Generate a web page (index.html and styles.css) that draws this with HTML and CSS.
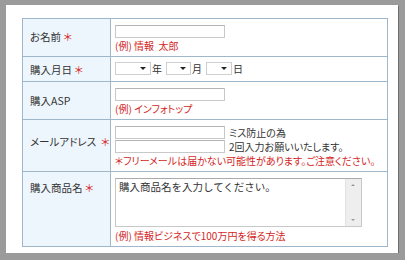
FILE: index.html
```html
<!DOCTYPE html>
<html lang="ja">
<head>
<meta charset="utf-8">
<link rel="stylesheet" href="styles.css">
</head>
<body>
<div class="panel">
  <table class="form">
    <tr class="r1">
      <th>お名前 <span class="req">＊</span></th>
      <td>
        <div class="inp w110"></div>
        <div class="ex">(例) 情報&nbsp; 太郎</div>
      </td>
    </tr>
    <tr class="r2">
      <th>購入月日 <span class="req">＊</span></th>
      <td>
        <div class="date">
          <span class="sel s36"><i class="tri"></i></span><span class="unit">年</span>
          <span class="sel s25"><i class="tri"></i></span><span class="unit">月</span>
          <span class="sel s26"><i class="tri"></i></span><span class="unit">日</span>
        </div>
      </td>
    </tr>
    <tr class="r3">
      <th>購入ASP</th>
      <td>
        <div class="inp w110"></div>
        <div class="ex">(例) インフォトップ</div>
      </td>
    </tr>
    <tr class="r4">
      <th>メールアドレス&nbsp; <span class="req">＊</span></th>
      <td>
        <div class="line"><div class="inp w110"></div><span class="note">ミス防止の為</span></div>
        <div class="line l2"><div class="inp w110"></div><span class="note">2回入力お願いいたします。</span></div>
        <div class="ex">＊フリーメールは届かない可能性があります。ご注意ください。</div>
      </td>
    </tr>
    <tr class="r5">
      <th class="top">購入商品名 <span class="req">＊</span></th>
      <td>
        <div class="ta">
          <div class="ta-text">購入商品名を入力してください。</div>
          <div class="ta-bar"><i class="up"></i><i class="down"></i></div>
        </div>
        <div class="ex">(例) 情報ビジネスで100万円を得る方法</div>
      </td>
    </tr>
  </table>
</div>
</body>
</html>
```
FILE: styles.css
```css
html, body {
  margin: 0;
  padding: 0;
  background: #9b9b9b;
}
body {
  padding: 5px 0 0 6px;
  font-family: "Noto Sans CJK JP", "Liberation Sans", sans-serif;
  font-size: 10px;
  color: #333;
  font-feature-settings: "palt";
}
.panel {
  width: 376px;
  height: 235px;
  background: #fff;
  padding: 13px 0 0 16px;
  box-shadow: 1px 1px 0 #6e6e6e;
}
.form {
  border-collapse: collapse;
  width: 366px;
  table-layout: fixed;
}
.form th, .form td {
  border: 1px solid #9fb7cb;
  padding: 0;
  white-space: nowrap;
}
.form th {
  width: 80px;
  background: #eef6fd;
  text-align: left;
  font-weight: normal;
  font-size: 10.5px;
  padding-left: 7px;
  vertical-align: middle;
  line-height: 13px;
}
.r1 th { padding-bottom: 3px; }
.r4 th { padding-bottom: 8px; }
.form th.top {
  vertical-align: top;
  padding-top: 9px;
}
.form td {
  padding-left: 4px;
  vertical-align: top;
}
.req { color: #d41f26; }
.r1 { height: 38px; }
.r2 { height: 25px; }
.r3 { height: 38px; }
.r4 { height: 52px; }
.r5 { height: 75px; }
.r1 td, .r3 td { padding-top: 6px; }
.r2 td { padding-top: 5px; }
.r4 td { padding-top: 6px; }
.r5 td { padding-top: 6px; }
.inp {
  height: 11px;
  border: 1px solid #c8c8c8;
  border-top-color: #b4b4b4;
  background: #fff;
}
.w110 { width: 108px; }
.ex {
  color: #d41f26;
  line-height: 13px;
  margin-top: 1px;
  font-size: 10px;
}
.date {
  display: flex;
  align-items: center;
  height: 13px;
}
.sel {
  position: relative;
  height: 11px;
  border: 1px solid #cfcfcf;
  background: #fff;
}
.s36 { width: 34px; }
.s25 { width: 23px; }
.s26 { width: 24px; }
.tri {
  position: absolute;
  right: 4px;
  top: 4px;
  width: 0;
  height: 0;
  border-left: 3px solid transparent;
  border-right: 3px solid transparent;
  border-top: 3px solid #222;
}
.unit {
  margin: 0 4px 0 1px;
  line-height: 13px;
}
.line {
  display: flex;
  align-items: center;
}
.l2 { margin-top: 1px; }
.note {
  margin-left: 4px;
  font-size: 10px;
  line-height: 13px;
}
.r4 .ex { margin-top: 1px; }
.ta {
  display: flex;
  width: 245px;
  height: 47px;
  border: 1px solid #c8c8c8;
  border-top-color: #aaa;
  background: #fff;
}
.ta-text {
  flex: 1;
  padding: 1px 3px;
  line-height: 13px;
  font-size: 10.5px;
  font-feature-settings: normal;
}
.ta-bar {
  position: relative;
  width: 15px;
  background: #eeeeee;
  border-left: 1px solid #e2e2e2;
}
.up, .down {
  position: absolute;
  left: 5px;
  width: 0;
  height: 0;
  border-left: 2px solid transparent;
  border-right: 2px solid transparent;
}
.up { top: 5px; border-bottom: 2px solid #999; }
.down { bottom: 5px; border-top: 2px solid #999; }
.r5 .ex { margin-top: 2px; }
```
